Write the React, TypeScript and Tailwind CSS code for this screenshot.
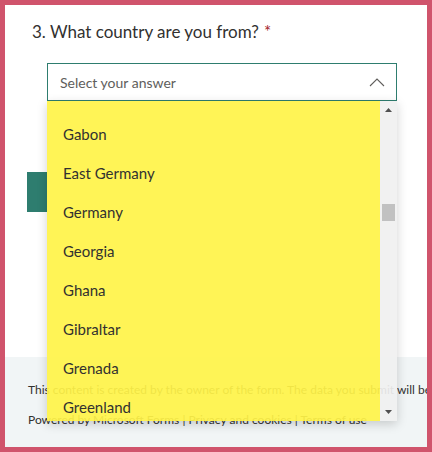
import React from "react";

const countries = ["Gabon", "East Germany", "Germany", "Georgia", "Ghana", "Gibraltar", "Grenada", "Greenland", "Guam"];

export default function App() {
  return (
    <div
      className="relative w-[432px] h-[452px] border-[5px] border-[#d0546c] bg-white flex flex-col overflow-hidden"
      style={{ fontFamily: 'Lato, "Open Sans", sans-serif' }}
    >
      <div className="flex-1 flex flex-col pl-[27px] pt-[15px]">
        <div className="flex items-baseline text-[17px] leading-[24px] text-[#323130]">
          <span className="mr-[4px]">3.</span>
          <span>What country are you from?</span>
          <span className="ml-[5px] text-[#a4262c]">*</span>
        </div>
        <div className="ml-[15px] mt-[19px] w-[350px] h-[38px] border border-[#2e7d6f] flex items-center justify-between pl-[12px] pr-[11px]">
          <span className="text-[14px] text-[#605e5c]">Select your answer</span>
          <svg width="16" height="9" viewBox="0 0 16 9" fill="none">
            <polyline points="1,8 8,1 15,8" stroke="#605e5c" strokeWidth="1.1" />
          </svg>
        </div>
        <div className="-ml-[5px] mt-[71px] w-[20px] h-[40px] bg-[#2e7d6f]" />
      </div>
      <footer className="h-[90px] shrink-0 bg-[#f1f5f6] pl-[23px] pt-[23px] flex flex-col gap-[11px] text-[12px] leading-[19px] text-[#323130] whitespace-nowrap">
        <div>This content is created by the owner of the form. The data you submit will be sent to the form owner.</div>
        <div>Powered by Microsoft Forms | Privacy and cookies | Terms of use</div>
      </footer>

      <div className="absolute left-[42px] top-[96px] w-[350px] h-[320px] flex shadow-[0_3px_10px_rgba(0,0,0,0.18)] overflow-hidden">
        <div className="flex-1 bg-[rgba(255,243,72,0.92)] pt-[14px] flex flex-col">
          {countries.map((c) => (
            <div key={c} className="h-[39px] shrink-0 flex items-center pl-[16px] text-[15px] text-[#323130]">
              {c}
            </div>
          ))}
        </div>
        <div className="relative w-[17px] bg-[rgba(240,240,240,0.92)]">
          <svg className="absolute left-[5px] top-[7px]" width="7" height="4" viewBox="0 0 7 4">
            <polygon points="0,4 3.5,0 7,4" fill="#505050" />
          </svg>
          <div className="absolute left-[2px] top-[103px] w-[13px] h-[17px] bg-[#c1c1c1]" />
          <svg className="absolute left-[5px] bottom-[7px]" width="7" height="4" viewBox="0 0 7 4">
            <polygon points="0,0 7,0 3.5,4" fill="#505050" />
          </svg>
        </div>
      </div>
    </div>
  );
}
